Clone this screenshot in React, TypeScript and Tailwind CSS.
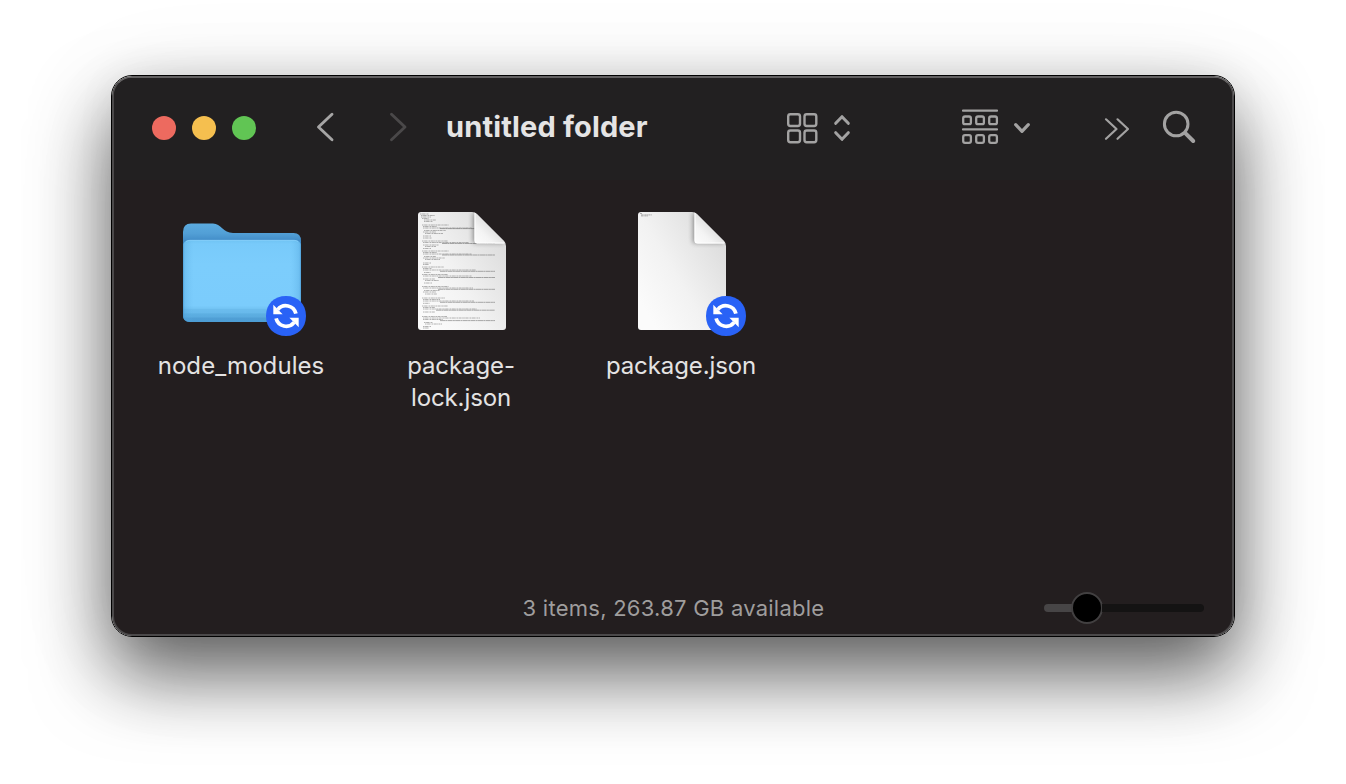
import React from "react";

function SyncBadge() {
  return (
    <svg className="absolute right-0 bottom-0 h-10 w-10" viewBox="0 0 40 40" fill="none">
      <path d="M20 0C32 0 40 8 40 20C40 32 32 40 20 40C8 40 0 32 0 20C0 8 8 0 20 0Z" fill="#2962f6" />
      <path d="M11.800 13.600A10.350 10.350 0 0 1 29.900 17.600" stroke="#fff" strokeWidth="3.800" />
      <path d="M7.300 8.800V18.200H16.600Z" fill="#fff" />
      <g transform="rotate(180 20 20)">
        <path d="M11.800 13.600A10.350 10.350 0 0 1 29.900 17.600" stroke="#fff" strokeWidth="3.800" />
        <path d="M7.300 8.800V18.200H16.600Z" fill="#fff" />
      </g>
    </svg>
  );
}

function FolderIcon() {
  return (
    <svg className="h-32 w-32" viewBox="0 0 128 128">
      <defs>
        <linearGradient id="back" x1="0" y1="15" x2="0" y2="34" gradientUnits="userSpaceOnUse">
          <stop offset="0" stopColor="#5cace0" />
          <stop offset=".55" stopColor="#529fd6" />
          <stop offset="1" stopColor="#3f89c5" />
        </linearGradient>
        <linearGradient id="front" x1="0" y1="32" x2="0" y2="114" gradientUnits="userSpaceOnUse">
          <stop offset="0" stopColor="#70c3f3" />
          <stop offset=".05" stopColor="#78cafa" />
          <stop offset=".3" stopColor="#7ccdfc" />
          <stop offset=".8" stopColor="#7bccfc" />
          <stop offset=".84" stopColor="#72c3f3" />
          <stop offset=".845" stopColor="#6bbced" />
          <stop offset=".89" stopColor="#68b9eb" />
          <stop offset=".9" stopColor="#5dafe2" />
          <stop offset=".94" stopColor="#5aabdf" />
          <stop offset=".95" stopColor="#509fd5" />
          <stop offset="1" stopColor="#4c9dd4" />
        </linearGradient>
        <linearGradient id="sides" x1="5" y1="0" x2="123" y2="0" gradientUnits="userSpaceOnUse">
          <stop offset="0" stopColor="#3e8fca" stopOpacity=".75" />
          <stop offset=".015" stopColor="#4d9fd7" stopOpacity=".3" />
          <stop offset=".09" stopColor="#60b4e8" stopOpacity="0" />
          <stop offset=".91" stopColor="#60b4e8" stopOpacity="0" />
          <stop offset=".985" stopColor="#4d9fd7" stopOpacity=".3" />
          <stop offset="1" stopColor="#3e8fca" stopOpacity=".75" />
        </linearGradient>
      </defs>
      <path d="M5 24Q5 15.5 13 15.5H35C43 15.5 45 25 55 25H115.500Q123 25 123 33V107Q123 114 116 114H12Q5 114 5 107Z" fill="url(#back)" />
      <path d="M5 39Q5 32 12 32H116Q123 32 123 39V107Q123 114 116 114H12Q5 114 5 107Z" fill="url(#front)" />
      <path d="M5 39Q5 32 12 32H116Q123 32 123 39V107Q123 114 116 114H12Q5 114 5 107Z" fill="url(#sides)" />
      <path d="M8 33.5Q10 32.300 12 32.300H116Q118 32.300 120 33.500" stroke="#8cd3fb" strokeWidth=".7" fill="none" />
    </svg>
  );
}

/* Greeked lines of the page preview: [y, indent, width, dense] */
const LINES: [number, number, number, number][] = [
  [6.000, 2, 9, 0], [7.500, 3, 14, 0], [9, 3, 10, 0], [10.500, 4, 7, 0], [12, 6, 12, 0], [13.500, 6, 9, 0],
  [17, 4, 27, 0], [18.500, 5, 14, 0], [20, 5, 49, 0], [20.600, 22, 53, 1], [22.500, 6, 22, 0], [24, 5, 13, 0], [25.500, 7, 18, 0], [28, 5, 8, 0], [30, 5, 9, 0],
  [33, 4, 26, 0], [34.500, 5, 46, 0], [35.500, 24, 53, 1], [37, 5, 16, 0], [38.500, 7, 11, 0], [40.500, 5, 8, 0],
  [43, 4, 27, 0], [44.500, 5, 14, 0], [46, 5, 49, 0], [47, 24, 53, 1], [48.500, 6, 12, 0], [50, 5, 22, 0], [51.500, 7, 15, 0], [55, 5, 8, 0], [56.500, 5, 6, 0],
  [59, 4, 22, 0], [60.500, 5, 9, 0], [62, 5, 53, 0], [63.300, 22, 55, 1], [64.500, 6, 7, 0],
  [66.500, 4, 26, 0], [68, 5, 49, 0], [69.500, 20, 57, 1], [71, 5, 12, 0], [72.500, 7, 14, 0], [75, 6, 8, 0],
  [78.500, 4, 27, 0], [80, 5, 50, 0], [81.300, 20, 57, 1], [82.500, 6, 16, 0], [84, 5, 13, 0], [86, 7, 12, 0],
  [90, 4, 23, 0], [91.500, 5, 17, 0], [93, 5, 51, 0], [94.300, 22, 55, 1], [95.300, 5, 7, 0],
  [98, 4, 26, 0], [99.500, 5, 12, 0], [101, 5, 54, 0], [102.200, 18, 59, 1], [104, 5, 12, 0],
  [108.500, 4, 25, 0], [110, 5, 57, 0], [111.500, 5, 20, 0], [112.600, 22, 55, 1], [114.500, 6, 9, 0], [116, 7, 17, 0], [118.500, 5, 8, 0], [120, 5, 6, 0],
];

function DocumentIcon({ id, full }: { id: string; full: boolean }) {
  return (
    <svg className="h-32 w-32" viewBox="0 0 128 128">
      <defs>
        <linearGradient id={`${id}-page`} x1="20" y1="90" x2="105" y2="40" gradientUnits="userSpaceOnUse">
          <stop offset="0" stopColor="#fbfbfb" />
          <stop offset=".45" stopColor="#f2f2f2" />
          <stop offset="1" stopColor="#dedede" />
        </linearGradient>
        <linearGradient id={`${id}-fold`} x1="76" y1="34" x2="92" y2="18" gradientUnits="userSpaceOnUse">
          <stop offset="0" stopColor="#fcfcfc" />
          <stop offset=".55" stopColor="#f4f4f4" />
          <stop offset="1" stopColor="#e2e2e2" />
        </linearGradient>
        <filter id={`${id}-soft`} x="-50%" y="-50%" width="200%" height="200%">
          <feGaussianBlur stdDeviation="2.500" />
        </filter>
        <clipPath id={`${id}-clip`}>
          <path d="M20 7Q20 4 23 4H74Q77 4 79 6L106 33Q108 35 108 38V119Q108 122 105 122H23Q20 122 20 119Z" />
        </clipPath>
      </defs>
      <path d="M20 7Q20 4 23 4H74Q77 4 79 6L106 33Q108 35 108 38V119Q108 122 105 122H23Q20 122 20 119Z" fill={`url(#${id}-page)`} />
      <g clipPath={`url(#${id}-clip)`}>
        {full ? (
          <g stroke="#555" strokeWidth="1">
            {LINES.map(([y, indent, width, dense], i) => (
              <path key={i} d={`M${20 + indent} ${y}H${20 + indent + width}`} strokeDasharray={dense ? "5 .3 2 .3" : "1.600 .5 3 .4 .8 .4"} opacity={dense ? 0.48 : 0.42} />
            ))}
          </g>
        ) : (
          <path d="M22 5.500H24M23 6.900H34M23 7.900H30" stroke="#777" strokeWidth=".8" strokeDasharray="2 .4 1 .3" opacity=".7" />
        )}
        <path d="M75 4V35H107L79 6Z" fill="#000" opacity=".4" filter={`url(#${id}-soft)`} />
        <path d="M76.500 4Q78 4.800 79 6L106 33Q107 34 107.500 35.500H79Q76.500 35.500 76.500 33Z" fill={`url(#${id}-fold)`} />
        <path d="M77 5V32.500Q77 35 79.500 35H106" fill="none" stroke="#fff" strokeWidth="1" />
      </g>
    </svg>
  );
}

function Item({ label, synced, children }: { label: React.ReactNode; synced?: boolean; children: React.ReactNode }) {
  return (
    <div className="flex w-[220px] flex-col items-center gap-[14px]">
      <div className="relative h-32 w-32">
        {children}
        {synced && <SyncBadge />}
      </div>
      <div className="-ml-[2px] text-center text-[24px] leading-8 whitespace-nowrap text-[#e4e3e3]">{label}</div>
    </div>
  );
}

function Toolbar() {
  return (
    <header className="flex h-[102px] shrink-0 items-start bg-[#222021] pl-[38px]">
      <div className="mt-[38px] flex gap-4">
        <span className="h-6 w-6 rounded-full bg-[#ed6a5f]" />
        <span className="h-6 w-6 rounded-full bg-[#f5bf4f]" />
        <span className="h-6 w-6 rounded-full bg-[#61c554]" />
      </div>
      <svg className="mt-[32px] ml-[58px] h-9 w-[98px] shrink-0" viewBox="314 110 98 36" fill="none" strokeWidth="2.900" strokeLinecap="round" strokeLinejoin="round">
        <path d="M332 114.200L318.500 127L332 139.700" stroke="#a6a5a5" />
        <path d="M391.500 114.200L405 127L391.500 139.700" stroke="#4a4849" />
      </svg>
      <h1 className="mt-[31px] ml-[34px] w-[340px] text-[29px] leading-9 font-bold tracking-[0.15px] whitespace-nowrap text-[#e5e4e4]">untitled folder</h1>
      <svg className="mt-[22px] h-14 w-[414px] shrink-0" viewBox="786 100 414 56" fill="none" stroke="#a3a2a2" strokeWidth="2.400" strokeLinecap="round" strokeLinejoin="round">
        <rect x="788.200" y="114.200" width="11.800" height="11.800" rx="2.200" />
        <rect x="804.500" y="114.200" width="11.800" height="11.800" rx="2.200" />
        <rect x="788.200" y="130.500" width="11.800" height="11.800" rx="2.200" />
        <rect x="804.500" y="130.500" width="11.800" height="11.800" rx="2.200" />
        <path d="M835.700 123.300L842 116.700L848.300 123.300M835.700 132.700L842 139.300L848.300 132.700" strokeWidth="3" />
        <path d="M963 110.700H997M963 129.400H997" strokeWidth="2.200" />
        <g strokeWidth="2.300">
          <rect x="963.200" y="116.500" width="7.700" height="7.700" rx="1.800" />
          <rect x="976.200" y="116.500" width="7.700" height="7.700" rx="1.800" />
          <rect x="989.200" y="116.500" width="7.700" height="7.700" rx="1.800" />
          <rect x="963.200" y="135.200" width="7.700" height="7.700" rx="1.800" />
          <rect x="976.200" y="135.200" width="7.700" height="7.700" rx="1.800" />
          <rect x="989.200" y="135.200" width="7.700" height="7.700" rx="1.800" />
        </g>
        <path d="M1015.700 124.700L1022 131.300L1028.300 124.700" strokeWidth="3.200" />
        <path d="M1106 119.300L1116.500 129L1106 138.800M1117.500 119.300L1128 129L1117.500 138.800" strokeWidth="2.200" />
        <circle cx="1176.200" cy="124" r="11.800" strokeWidth="3" />
        <path d="M1185.300 133.100L1193.200 141" strokeWidth="4" />
      </svg>
    </header>
  );
}

export default function App() {
  return (
    <div className="flex h-[784px] w-[1346px] items-start overflow-hidden bg-white pt-[75px] pl-[111px] font-['Inter','Liberation_Sans',sans-serif]">
      <main className="h-[562px] w-[1124px] rounded-[21px] border border-black shadow-[0_38px_76px_rgba(0,0,0,0.6),0_0_40px_rgba(0,0,0,0.05),0_16px_110px_rgba(0,0,0,0.08)]">
        <div className="flex h-full flex-col overflow-hidden rounded-[20px] border-2 border-[#4b494a] border-t-[#626061] bg-[#231e1f]">
          <Toolbar />
          <section className="flex flex-1 pt-7 pl-[18px]">
            <Item label={<span className="tracking-[0.08px]">node_modules</span>} synced>
              <FolderIcon />
            </Item>
            <Item label={<span className="tracking-[-0.1px]">package-<br />lock.json</span>}>
              <DocumentIcon id="lock" full />
            </Item>
            <Item label={<span className="tracking-[-0.1px]">package.json</span>} synced>
              <DocumentIcon id="manifest" full={false} />
            </Item>
          </section>
          <footer className="grid h-[52px] shrink-0 grid-cols-[1fr_auto_1fr] items-center">
            <span />
            <p className="ml-px text-[22px] leading-8 tracking-[0.25px] whitespace-nowrap text-[#9f9d9d]">3 items, 263.87 GB available</p>
            <div className="mr-7 flex h-8 w-40 items-center justify-self-end">
              <span className="h-2 w-7 rounded-l-full bg-[#474546]" />
              <span className="-mx-px h-8 w-8 rounded-full border-2 border-[#424041] bg-black" />
              <span className="h-2 flex-1 rounded-r-full bg-[#141313]" />
            </div>
          </footer>
        </div>
      </main>
    </div>
  );
}
